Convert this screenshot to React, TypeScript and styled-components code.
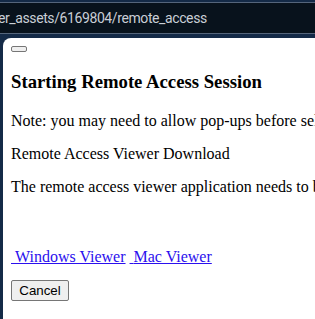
import styled, { createGlobalStyle } from "styled-components";

const GlobalStyle = createGlobalStyle`
  html, body {
    margin: 0;
    padding: 0;
    background: #142a47;
    overflow: hidden;
  }
`;

const Window = styled.div`
  width: 315px;
  height: 319px;
  display: flex;
  flex-direction: column;
  overflow: hidden;
  background: #142a47;
`;

const AddressBar = styled.div`
  margin-top: 2px;
  height: 30px;
  border-top: 1px solid #55657b;
  border-bottom: 1px solid #55657b;
  background: #08121c;
  display: flex;
  align-items: center;
  white-space: nowrap;
`;

const Url = styled.span`
  margin-left: -2px;
  font-family: Roboto, "Noto Sans", sans-serif;
  font-size: 14px;
  letter-spacing: -0.4px;
  color: #c9ced6;
`;

const Page = styled.div`
  flex: 1;
  margin: 4px 0 0 3px;
  width: 900px;
  background: #fff;
  border-top-left-radius: 8px;
  padding: 8px;
  font-family: "Liberation Serif", "Times New Roman", serif;
  font-size: 16px;
  color: #000;
`;

const CloseButton = styled.button`
  display: block;
  width: 16px;
  height: 6px;
  padding: 0;
  border: 1px solid #767676;
  border-radius: 2px;
  background: #efefef;
`;

const Heading = styled.h3`
  margin: 19px 0 19px;
  font-size: 18.72px;
  font-weight: bold;
  line-height: 22px;
`;

const Text = styled.p<{ gap?: number }>`
  margin: 0 0 ${(p) => p.gap ?? 15}px;
  line-height: 18px;
`;

const LinkRow = styled.p`
  margin: 0 0 14px;
  line-height: 18px;
`;

const Link = styled.a`
  color: #2b10ee;
  text-decoration: underline;
`;

const Button = styled.button`
  font-family: "Liberation Sans", Arial, sans-serif;
  font-size: 13.33px;
  padding: 1px 6px;
  height: 21px;
  width: 58px;
  border: 1px solid #767676;
  border-radius: 2px;
  background: #efefef;
  color: #000;
`;

export default function App() {
  return (
    <Window>
      <GlobalStyle />
      <AddressBar>
        <Url>er_assets/6169804/remote_access</Url>
      </AddressBar>
      <Page>
        <CloseButton />
        <Heading>Starting Remote Access Session</Heading>
        <Text>Note: you may need to allow pop-ups before selecting a viewer.</Text>
        <Text>Remote Access Viewer Download</Text>
        <Text gap={52}>
          The remote access viewer application needs to be installed on your computer.
        </Text>
        <LinkRow>
          <Link href="#">{"\u00a0"}Windows Viewer</Link> <Link href="#">{"\u00a0"}Mac Viewer</Link>
        </LinkRow>
        <Button>Cancel</Button>
      </Page>
    </Window>
  );
}
